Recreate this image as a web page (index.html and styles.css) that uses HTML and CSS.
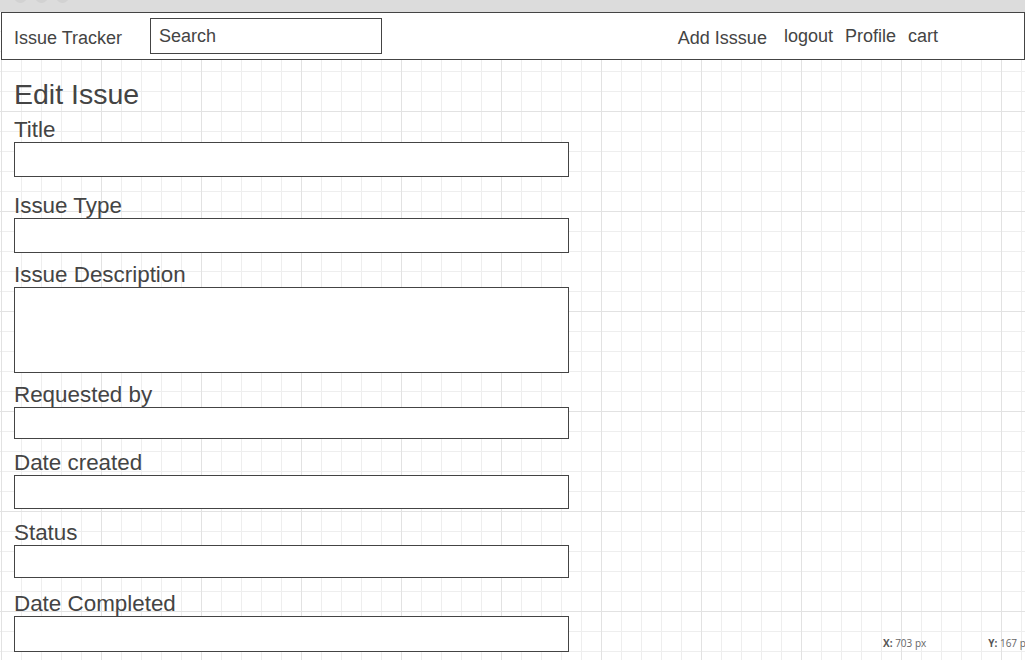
FILE: index.html
```html
<!DOCTYPE html>
<html lang="en">
<head>
<meta charset="utf-8">
<title>Issue Tracker - Edit Issue</title>
<link rel="stylesheet" href="styles.css">
</head>
<body>
<div class="chrome">
  <span class="dot"></span><span class="dot"></span><span class="dot"></span>
</div>
<header class="navbar">
  <span class="brand">Issue Tracker</span>
  <div class="search">Search</div>
  <nav class="links">
    <a class="link link-add">Add Isssue</a>
    <a class="link">logout</a>
    <a class="link">Profile</a>
    <a class="link">cart</a>
  </nav>
</header>
<main class="page">
  <h1 class="title">Edit Issue</h1>
  <form class="form">
    <div class="field">
      <label class="label">Title</label>
      <input class="box" type="text">
    </div>
    <div class="field gap-lg">
      <label class="label">Issue Type</label>
      <input class="box" type="text">
    </div>
    <div class="field gap-sm">
      <label class="label">Issue Description</label>
      <textarea class="box box-area"></textarea>
    </div>
    <div class="field gap-sm">
      <label class="label">Requested by</label>
      <input class="box box-short" type="text">
    </div>
    <div class="field">
      <label class="label">Date created</label>
      <input class="box box-mid" type="text">
    </div>
    <div class="field">
      <label class="label">Status</label>
      <input class="box box-status" type="text">
    </div>
    <div class="field gap-md">
      <label class="label">Date Completed</label>
      <input class="box box-tall" type="text">
    </div>
  </form>
</main>
<div class="coords">
  <span class="coord"><b>X:</b> 703 px</span>
  <span class="coord"><b>Y:</b> 167 px</span>
</div>
</body>
</html>
```

FILE: styles.css
```css
html, body {
  margin: 0;
  padding: 0;
  height: 100%;
  overflow: hidden;
}

body {
  font-family: "Liberation Sans", Arial, sans-serif;
  color: #444;
  background-color: #fff;
  background-image:
    linear-gradient(to right, #e2e2e2 1px, transparent 1px),
    linear-gradient(to bottom, #e2e2e2 1px, transparent 1px),
    linear-gradient(to right, #eeeeee 1px, transparent 1px),
    linear-gradient(to bottom, #eeeeee 1px, transparent 1px);
  background-size: 100px 100px, 100px 100px, 20px 20px, 20px 20px;
  background-position: 1px 11px;
  position: relative;
}

.chrome {
  height: 12px;
  background: #dcdcdc;
  display: flex;
  gap: 8px;
  padding-left: 14px;
  overflow: hidden;
}

.dot {
  width: 13px;
  height: 13px;
  border-radius: 50%;
  background: #d2d2d2;
  margin-top: -10px;
}

.navbar {
  box-sizing: border-box;
  margin-left: 1px;
  width: 1024px;
  height: 48px;
  border: 1px solid #444;
  background: #fff;
  display: flex;
  align-items: center;
  padding: 0 86px 0 12px;
  font-size: 18px;
}

.brand {
  margin-top: 4px;
}

.search {
  box-sizing: border-box;
  margin-left: 28px;
  width: 232px;
  height: 36px;
  border: 1px solid #444;
  padding: 0 0 0 8px;
  display: flex;
  align-items: center;
  font-size: 18px;
}

.links {
  margin-left: auto;
  display: flex;
  align-items: center;
  gap: 12px;
}

.link {
  color: #444;
  text-decoration: none;
}

.link-add {
  margin-top: 4px;
  margin-right: 5px;
}

.page {
  padding: 18px 0 0 14px;
}

.title {
  margin: 0;
  font-size: 28.5px;
  font-weight: normal;
  line-height: 32px;
}

.form {
  margin-top: 8px;
  display: flex;
  flex-direction: column;
}

.field {
  display: flex;
  flex-direction: column;
  margin-top: 12px;
}

.field:first-child {
  margin-top: 0;
}

.gap-lg { margin-top: 17px; }
.gap-md { margin-top: 14px; }
.gap-sm { margin-top: 10px; }

.label {
  font-size: 22.4px;
  line-height: 24px;
  height: 24px;
}

.box {
  box-sizing: border-box;
  display: block;
  width: 555px;
  height: 35px;
  margin: 0;
  border: 1px solid #444;
  background: #fff;
  border-radius: 0;
  padding: 0;
  font: inherit;
  resize: none;
  outline: none;
}

.box-area { height: 86px; }
.box-short { height: 32px; }
.box-mid { height: 34px; }
.box-status { height: 33px; }
.box-tall { height: 36px; }

.coords {
  position: absolute;
  left: 883px;
  top: 636px;
  display: flex;
  gap: 62px;
  font-family: "Open Sans", "DejaVu Sans", sans-serif;
  font-size: 10px;
  color: #666;
  white-space: nowrap;
}

.coord b {
  color: #555;
}
```
